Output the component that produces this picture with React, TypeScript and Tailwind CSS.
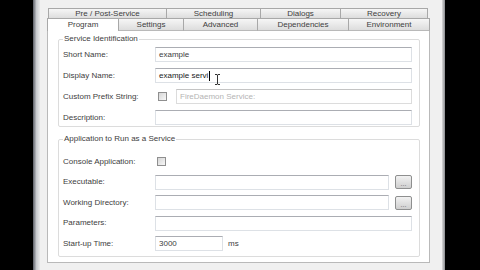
import type { ReactNode } from "react";

const topTabs: [string, number][] = [
  ["Pre / Post-Service", 118],
  ["Scheduling", 94],
  ["Dialogs", 80],
  ["Recovery", 88],
];

const bottomTabs: [string, number, boolean][] = [
  ["Program", 71, true],
  ["Settings", 65, false],
  ["Advanced", 74, false],
  ["Dependencies", 91, false],
  ["Environment", 82, false],
];

function Row({ label, children }: { label: string; children: ReactNode }) {
  return (
    <div className="flex h-[15px] items-center">
      <span className="w-[92px] shrink-0 whitespace-nowrap">{label}</span>
      {children}
    </div>
  );
}

function TextBox({ children, className = "", disabled = false }: { children?: ReactNode; className?: string; disabled?: boolean }) {
  return (
    <div
      className={
        "relative flex h-[15px] items-center whitespace-nowrap border bg-white pl-[3px] " +
        (disabled ? "border-[#dcdcdc] border-t-[#c4c4c4] text-[#b4b4b4] " : "border-[#dde1e6] border-t-[#abadb3] ") +
        className
      }
    >
      {children}
    </div>
  );
}

function CheckBox({ className = "" }: { className?: string }) {
  return <span className={"block h-[9px] w-[9px] shrink-0 border border-[#8f8f8f] bg-gradient-to-br from-[#d6d6d6] to-[#f7f7f7] " + className} />;
}

function Browse() {
  return (
    <div className="ml-[6px] flex h-[14px] w-[17px] shrink-0 items-end justify-center rounded-[2px] border border-[#8e8f8f] bg-gradient-to-b from-[#f2f2f2] to-[#cfcfcf] pb-[1px] text-[7px] leading-[7px] text-[#666]">
      ...
    </div>
  );
}

export default function App() {
  return (
    <div className="flex h-[270px] w-[480px] overflow-hidden bg-black font-['Liberation_Sans',Arial,sans-serif] text-[8px] text-[#404040]">
      <div className="w-[33px] shrink-0" />
      {/* left window frame */}
      <div className="w-[7px] shrink-0 bg-gradient-to-r from-[#5d6068] via-[#c9cbcf] to-[#e9e9ea]" />

      {/* window body */}
      <div className="flex w-[402px] shrink-0 flex-col bg-[#f0f0f0] pl-[7px] pt-[8px]">
        {/* tab strip, back row */}
        <div className="flex pl-[1px]">
          {topTabs.map(([name, w], i) => (
            <div
              key={name}
              style={{ width: w }}
              className={
                "flex h-[10px] items-center justify-center border-t border-l border-[#a8a8a8] bg-gradient-to-b from-[#f6f6f6] to-[#dddddd] leading-[10px] " +
                (i === topTabs.length - 1 ? "border-r" : "")
              }
            >
              {name}
            </div>
          ))}
        </div>

        {/* tab strip, front row */}
        <div className="flex">
          {bottomTabs.map(([name, w, active], i) => (
            <div
              key={name}
              style={{ width: w }}
              className={
                "flex h-[13px] items-center justify-center border-t border-l border-[#a8a8a8] leading-[10px] " +
                (active ? "bg-white pb-[1px] " : "border-b border-b-[#b9b9b9] bg-gradient-to-b from-[#f6f6f6] to-[#dddddd] pt-[1px] ") +
                (i === bottomTabs.length - 1 ? "border-r" : "")
              }
            >
              {name}
            </div>
          ))}
        </div>

        {/* tab page */}
        <div className="flex w-[383px] flex-col gap-[7px] border-x border-b border-[#b9b9b9] bg-white pb-[5px] pl-[10px] pr-[9px] pt-[3px]">
          <fieldset className="rounded-[2px] border border-[#dcdcdc] pb-[1px] pl-[4px] pr-[7px]">
            <legend className="px-[1px] leading-[10px]">Service Identification</legend>
            <div className="flex flex-col gap-[6px] pt-[3px]">
              <Row label="Short Name:">
                <TextBox className="flex-1">example</TextBox>
              </Row>
              <Row label="Display Name:">
                <TextBox className="flex-1">
                  <span className="text-[#1a1a1a]">example servi</span>
                  <span className="ml-[1px] block h-[10px] w-px bg-black" />
                  {/* mouse I-beam */}
                  <svg className="absolute left-[58px] top-[5px]" width="7" height="11" viewBox="0 0 7 11">
                    <path d="M1 0.5h2l0.5 0.6 0.5-0.6h2M3.5 1v9M1 10.5h2l0.5-0.6 0.5 0.6h2" fill="none" stroke="#333" strokeWidth="1" />
                  </svg>
                </TextBox>
              </Row>
              <Row label="Custom Prefix String:">
                <CheckBox className="ml-[3px]" />
                <TextBox disabled className="ml-[9px] flex-1">FireDaemon Service:</TextBox>
              </Row>
              <Row label="Description:">
                <TextBox className="flex-1" />
              </Row>
            </div>
          </fieldset>

          <fieldset className="rounded-[2px] border border-[#dcdcdc] pb-[5px] pl-[4px] pr-[7px]">
            <legend className="px-[1px] leading-[10px]">Application to Run as a Service</legend>
            <div className="flex flex-col gap-[5.5px] pt-[10px]">
              <Row label="Console Application:">
                <CheckBox className="ml-[2px]" />
              </Row>
              <Row label="Executable:">
                <TextBox className="flex-1" />
                <Browse />
              </Row>
              <Row label="Working Directory:">
                <TextBox className="flex-1" />
                <Browse />
              </Row>
              <Row label="Parameters:">
                <TextBox className="flex-1" />
              </Row>
              <Row label="Start-up Time:">
                <TextBox className="w-[68px]">3000</TextBox>
                <span className="ml-[5px]">ms</span>
              </Row>
            </div>
          </fieldset>
        </div>
      </div>

      {/* right window frame */}
      <div className="w-[3px] shrink-0 bg-gradient-to-r from-[#d9d9d9] to-[#8a8c90]" />
    </div>
  );
}
